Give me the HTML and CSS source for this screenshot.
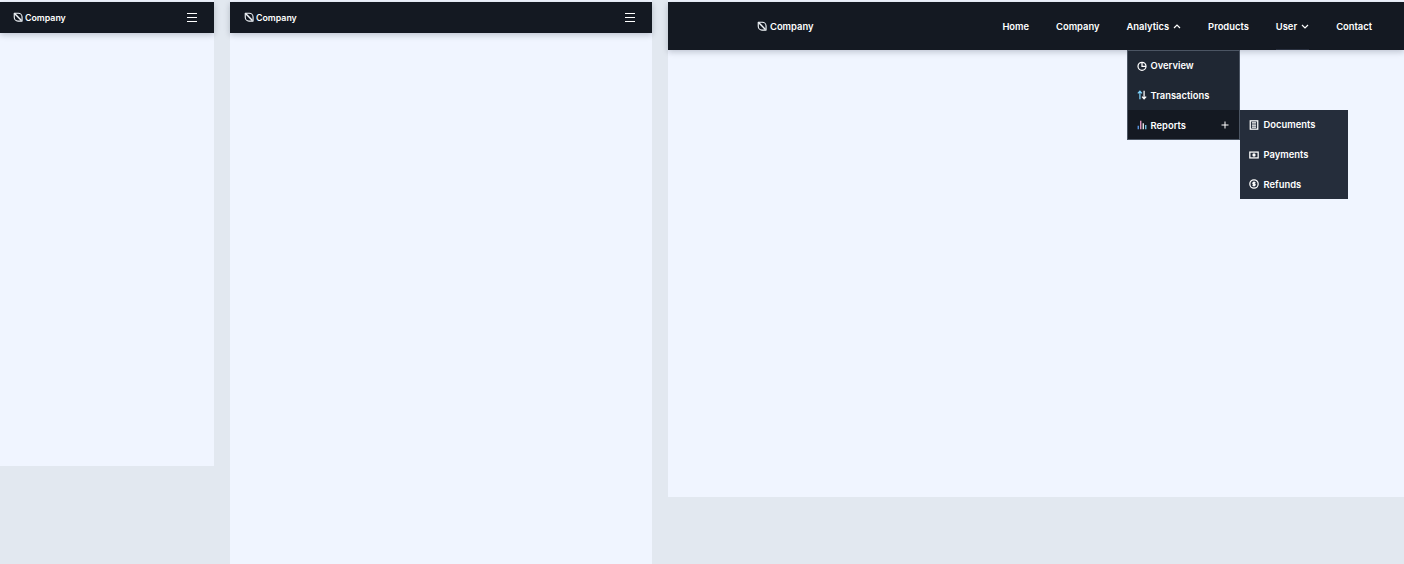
FILE: index.html
```html
<!DOCTYPE html>
<html lang="en">
<head>
<meta charset="utf-8">
<title>Company navigation</title>
<link rel="stylesheet" href="styles.css">
</head>
<body>
<div class="stage">
  <section class="frame frame-sm">
    <header class="bar bar-mobile">
      <a class="brand"><svg class="logo" viewBox="0 0 16 16"><use href="#logo"/></svg>Company</a>
      <svg class="burger" viewBox="0 0 10 9"><path d="M0 .5h10M0 4.500h10M0 8.500h10"/></svg>
    </header>
  </section>
  <section class="frame frame-md">
    <header class="bar bar-mobile">
      <a class="brand"><svg class="logo" viewBox="0 0 16 16"><use href="#logo"/></svg>Company</a>
      <svg class="burger" viewBox="0 0 10 9"><path d="M0 .5h10M0 4.500h10M0 8.500h10"/></svg>
    </header>
  </section>
  <section class="frame frame-lg">
    <header class="bar bar-desktop">
      <a class="brand"><svg class="logo" viewBox="0 0 16 16"><use href="#logo"/></svg>Company</a>
      <ul class="nav">
        <li>Home</li>
        <li>Company</li>
        <li class="has-menu">
          <span class="nav-label">Analytics
            <svg class="chev" viewBox="0 0 8 5"><path d="M1 4l3-3 3 3"/></svg>
          </span>
          <ul class="menu">
            <li><svg class="ico" viewBox="0 0 12 12"><circle cx="6" cy="6.300" r="4.800"/><path d="M6 1.500v4.800h4.800"/></svg>Overview</li>
            <li><svg class="ico" viewBox="0 0 12 12"><path class="c-cyan" d="M3.500 11V1.500M1 4l2.500-2.500L6 4"/><path d="M8.500 1v9.500M6 8l2.500 2.500L11 8"/></svg>Transactions</li>
            <li class="is-open">
              <svg class="ico" viewBox="0 0 12 12"><path class="c-blue" d="M1.500 11V7"/><path class="c-rose" d="M4.500 11V1"/><path d="M7.500 11V4"/><path class="c-cyan" d="M10.500 11V6"/></svg>
              Reports
              <svg class="plus" viewBox="0 0 8 8"><path d="M4 .5v7M.5 4h7"/></svg>
              <ul class="submenu">
                <li><svg class="ico" viewBox="0 0 12 12"><rect x="1.500" y="1" width="9" height="10"/><path d="M3.500 3.500h5M3.500 6h5M3.500 8.500h5"/></svg>Documents</li>
                <li><svg class="ico" viewBox="0 0 12 12"><rect x="1" y="2.500" width="10" height="7"/><circle class="dot" cx="6" cy="6" r="2"/></svg>Payments</li>
                <li><svg class="ico" viewBox="0 0 12 12"><circle cx="6" cy="6" r="5"/><path d="M7.800 4.300H5.200a.9.900 0 0 0 0 1.700h1.600a.9.900 0 0 1 0 1.700H4.200M6 3v6"/></svg>Refunds</li>
              </ul>
            </li>
          </ul>
        </li>
        <li>Products</li>
        <li class="nav-user">
          <span class="nav-label">User
            <svg class="chev" viewBox="0 0 8 5"><path d="M1 1l3 3 3-3"/></svg>
          </span>
        </li>
        <li>Contact</li>
      </ul>
    </header>
  </section>
</div>
<svg class="defs" aria-hidden="true">
  <symbol id="logo" viewBox="0 0 16 16">
    <path d="M2 2H8.500a6 6 0 0 1 6 6V14.500H8a6 6 0 0 1-6-6z" fill="none" stroke="currentColor" stroke-width="1.800" stroke-linejoin="round"/>
    <path d="M2.500 2.500L13.500 13.500" fill="none" stroke="currentColor" stroke-width="2.400"/>
  </symbol>
</svg>
</body>
</html>
```

FILE: styles.css
```css
* { box-sizing: border-box; }

html, body {
  margin: 0;
  height: 100%;
  overflow: hidden;
}

body {
  background: #e2e8f0;
  font-family: "Inter", "Noto Sans", "Liberation Sans", sans-serif;
  font-size: 9.400px;
  font-weight: 600;
  color: #fff;
}

ul { list-style: none; margin: 0; padding: 0; }

.defs { display: none; }

.stage {
  display: flex;
  gap: 16px;
  align-items: flex-start;
  width: 1404px;
  height: 564px;
}

.frame {
  background: #f0f5ff;
  padding-top: 2px;
  flex: none;
}

.frame-sm { width: 214px; height: 466px; }
.frame-md { width: 422px; height: 564px; }
.frame-lg { width: 736px; height: 497px; }

.bar {
  display: flex;
  align-items: center;
  justify-content: space-between;
  background: #141922;
  box-shadow: 0 2px 6px rgba(15, 23, 42, .22);
}

.bar-mobile {
  height: 31px;
  padding: 0 17px 1px 13px;
}

.bar-mobile .brand { font-size: 8.800px; gap: 2px; }

.frame-md .bar-mobile { padding-left: 14px; }

.bar-desktop {
  height: 48px;
  padding: 0 32px 0 89px;
}

.brand {
  display: flex;
  align-items: center;
  gap: 3px;
}

.logo { width: 10px; height: 10px; color: #f1f5f9; }

.burger {
  width: 10px;
  height: 9px;
  fill: none;
  stroke: #fff;
  stroke-width: 1;
}

.nav {
  display: flex;
  align-items: center;
  gap: 27px;
  height: 100%;
}

.nav > li { position: relative; display: flex; align-items: center; height: 100%; }

.nav-label { display: flex; align-items: center; gap: 4px; }

.nav-user::after {
  content: "";
  position: absolute;
  left: 0;
  right: 0;
  bottom: 0;
  height: 1px;
  background: #2a3140;
}

.chev { width: 8px; height: 5px; fill: none; stroke: #fff; stroke-width: 1.200; }

.menu {
  position: absolute;
  top: 48px;
  left: 0;
  width: 113px;
  background: #1f2733;
  border: 1px solid #4b5563;
}

.menu > li, .submenu > li {
  position: relative;
  display: flex;
  align-items: center;
  gap: 4px;
  height: 29.500px;
  padding-left: 9px;
}

.menu > li.is-open {
  background: #141922;
  height: 29px;
  padding-top: 1px;
}

.submenu {
  position: absolute;
  top: 0;
  left: 112px;
  width: 108px;
  background: #252d3b;
}

.submenu > li { height: 29.700px; gap: 5px; }

.ico {
  width: 10px;
  height: 10px;
  flex: none;
  fill: none;
  stroke: #fff;
  stroke-width: 1.500;
}

.ico .dot { fill: #fff; stroke: none; }
.ico .c-cyan { stroke: #7dd3fc; }
.ico .c-blue { stroke: #60a5fa; }
.ico .c-rose { stroke: #f9a8d4; }

.plus {
  position: absolute;
  right: 10px;
  top: 11px;
  width: 8px;
  height: 8px;
  stroke: #fff;
  stroke-width: 1;
  fill: none;
}
```
